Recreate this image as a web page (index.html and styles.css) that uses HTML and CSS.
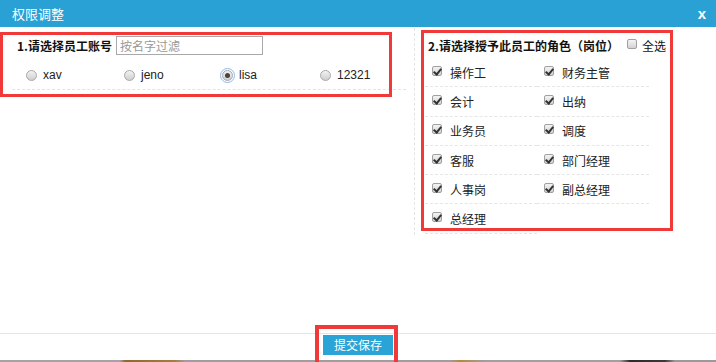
FILE: index.html
```html
<!DOCTYPE html>
<html lang="zh-CN">
<head>
	<meta charset="UTF-8">
	<meta name="viewport" content="width=device-width, initial-scale=1.0">
	<title>权限调整</title>
	<link rel="stylesheet" href="styles.css">
</head>
<body>
	<div class="dialog">
		<div class="dialog-head">
			<span class="dialog-title">权限调整</span>
			<span class="dialog-close">x</span>
		</div>
		<div class="dialog-body">
			<div class="user-pane">
				<div class="user-filter">
					<b>1.请选择员工账号</b>
					<input class="filter-input" type="text" placeholder="按名字过滤">
				</div>
				<div class="user-list">
					<label class="user-item"><span class="radio"></span>xav</label>
					<label class="user-item"><span class="radio"></span>jeno</label>
					<label class="user-item"><span class="radio checked"></span>lisa</label>
					<label class="user-item"><span class="radio"></span>12321</label>
				</div>
			</div>
			<div class="role-pane">
				<div class="role-head">
					<b>2.请选择授予此员工的角色（岗位）</b>
					<label class="check-all"><span class="cb"></span>全选</label>
				</div>
				<div class="role-list">
					<label class="role-item"><span class="cb on"></span>操作工</label>
					<label class="role-item"><span class="cb on"></span>财务主管</label>
					<label class="role-item"><span class="cb on"></span>会计</label>
					<label class="role-item"><span class="cb on"></span>出纳</label>
					<label class="role-item"><span class="cb on"></span>业务员</label>
					<label class="role-item"><span class="cb on"></span>调度</label>
					<label class="role-item"><span class="cb on"></span>客服</label>
					<label class="role-item"><span class="cb on"></span>部门经理</label>
					<label class="role-item"><span class="cb on"></span>人事岗</label>
					<label class="role-item"><span class="cb on"></span>副总经理</label>
					<label class="role-item"><span class="cb on"></span>总经理</label>
				</div>
			</div>
		</div>
		<div class="dialog-foot">
			<button class="btn-save">提交保存</button>
		</div>
		<div class="page-strip"></div>

		<!-- annotation boxes -->
		<div class="mark mark-users"></div>
		<div class="mark mark-roles"></div>
		<div class="mark mark-save"></div>
	</div>
</body>
</html>
```

FILE: styles.css
```css
* {
	box-sizing: border-box;
}

body {
	margin: 0;
	padding: 0;
	background-color: #fff;
	font-family: "Liberation Sans", "Noto Sans CJK SC", sans-serif;
	font-size: 12px;
	color: #222;
}

.dialog {
	position: relative;
	width: 716px;
	height: 362px;
	overflow: hidden;
}

.dialog-head {
	display: flex;
	align-items: center;
	justify-content: space-between;
	height: 27px;
	padding: 0 10px 0 12px;
	background-color: #29a1d4;
	color: #fff;
}

.dialog-title {
	font-size: 13px;
	font-family: "Noto Sans CJK SC", sans-serif;
}

.dialog-close {
	font-size: 15px;
	font-weight: bold;
	font-family: "Liberation Sans", sans-serif;
}

.dialog-body {
	display: flex;
	align-items: flex-start;
	height: 306px;
	padding-top: 1px;
}

/* users */
.user-pane {
	width: 415px;
	height: 207px;
	border-right: 1px dashed #e4e4e4;
}

.user-filter {
	display: flex;
	align-items: center;
	gap: 4px;
	height: 27px;
	padding: 8px 0 0 17px;
}

.user-filter b,
.role-head b {
	font-family: "Noto Sans CJK SC", sans-serif;
	font-size: 12px;
	line-height: 19px;
	color: #111;
	white-space: nowrap;
}

.filter-input {
	width: 147px;
	height: 19px;
	margin: 0;
	padding: 0 3px;
	border: 1px solid #a9a9a9;
	font-family: "Noto Sans CJK SC", sans-serif;
	font-size: 12px;
	outline: none;
}

.filter-input::placeholder {
	color: #999;
}

.user-list {
	display: flex;
	margin: 0 8px 0 12px;
	padding: 10px 0 4px;
	border-bottom: 1px dashed #e4e4e4;
}

.user-item {
	display: flex;
	align-items: center;
	width: 98px;
	height: 20px;
	padding-left: 14px;
	color: #222;
}

.radio {
	position: relative;
	width: 11px;
	height: 11px;
	margin-right: 6px;
	border: 1px solid #a8a8a8;
	border-radius: 50%;
	background: linear-gradient(#f2f2f2, #cfcfcf);
}

.radio.checked {
	outline: 1px solid #8fb8ec;
	outline-offset: 1px;
	border-radius: 50%;
}

.radio.checked::after {
	content: "";
	position: absolute;
	top: 2px;
	left: 2px;
	width: 5px;
	height: 5px;
	border-radius: 50%;
	background-color: #444;
}

/* roles */
.role-pane {
	flex: 1;
}

.role-head {
	display: flex;
	align-items: center;
	height: 27px;
	padding: 8px 0 0 13px;
}

.check-all {
	display: flex;
	flex-shrink: 0;
	align-items: center;
	margin-left: 8px;
	font-family: "Noto Sans CJK SC", sans-serif;
	font-size: 12px;
	color: #111;
	white-space: nowrap;
}

.check-all .cb {
	margin-top: -3px;
	margin-right: 5px;
}

.role-list {
	display: flex;
	flex-wrap: wrap;
	width: 224px;
	margin: 3px 0 0 10px;
}

.role-item {
	display: flex;
	align-items: center;
	width: 112px;
	height: 29.3px;
	padding-left: 7px;
	border-bottom: 1px dashed #e6e6e6;
	font-family: "Noto Sans CJK SC", sans-serif;
	color: #222;
}

.cb {
	position: relative;
	width: 10px;
	height: 10px;
	margin-top: -3px;
	margin-right: 8px;
	border: 1px solid #a0a0a0;
	border-radius: 2px;
	background: linear-gradient(#f4f4f4, #d2d2d2);
}

.cb.on::after {
	content: "";
	position: absolute;
	top: 0;
	left: 2px;
	width: 3px;
	height: 6px;
	border: solid #333;
	border-width: 0 2px 2px 0;
	transform: rotate(40deg);
}

/* footer */
.dialog-foot {
	display: flex;
	justify-content: center;
	height: 27px;
	padding-top: 1px;
	border-top: 1px solid #e6e6e6;
}

.btn-save {
	width: 70px;
	height: 20px;
	padding: 0;
	border: none;
	background-color: #2aa3d6;
	color: #fff;
	font-family: "Noto Sans CJK SC", sans-serif;
	font-size: 12px;
	line-height: 20px;
}

.page-strip {
	height: 2px;
	background: linear-gradient(to right, #a4a4a4 0, #a4a4a4 120px, #8c6a30 125px, #a08040 175px, #9e9e9e 185px, #9e9e9e 450px, #b08a40 460px, #a0a0a0 485px, #a0a0a0 620px, #2c2c2c 630px, #3a3a3a 665px, #9a9a9a 675px);
}

/* red annotation boxes laid over the dialog */
.mark {
	position: absolute;
	border: 3px solid #f03a3a;
}

.mark-users {
	top: 32px;
	left: 0;
	width: 392px;
	height: 65px;
}

.mark-roles {
	top: 30px;
	left: 421px;
	width: 252px;
	height: 201px;
}

.mark-save {
	top: 325px;
	left: 315px;
	width: 83px;
	height: 45px;
	border-width: 4px;
}
```
